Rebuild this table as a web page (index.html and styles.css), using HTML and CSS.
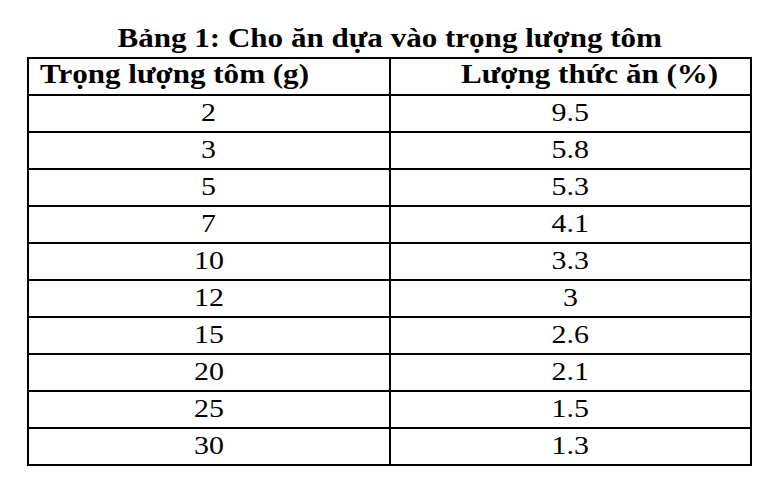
FILE: index.html
```html
<!DOCTYPE html>
<html lang="vi">
<head>
<meta charset="utf-8">
<title>Bảng 1</title>
<link rel="stylesheet" href="styles.css">
</head>
<body>
<div class="page">
  <div class="title"><span class="stretch">Bảng 1: Cho ăn dựa vào trọng lượng tôm</span></div>
  <table class="feed">
    <colgroup>
      <col class="col-half">
      <col class="col-half">
    </colgroup>
    <thead>
      <tr>
        <th class="h-left"><span class="stretch left">Trọng lượng tôm (g)</span></th>
        <th class="h-right"><span class="stretch left">Lượng thức ăn (%)</span></th>
      </tr>
    </thead>
    <tbody>
      <tr><td><span class="stretch">2</span></td><td><span class="stretch">9.5</span></td></tr>
      <tr><td><span class="stretch">3</span></td><td><span class="stretch">5.8</span></td></tr>
      <tr><td><span class="stretch">5</span></td><td><span class="stretch">5.3</span></td></tr>
      <tr><td><span class="stretch">7</span></td><td><span class="stretch">4.1</span></td></tr>
      <tr><td><span class="stretch">10</span></td><td><span class="stretch">3.3</span></td></tr>
      <tr><td><span class="stretch">12</span></td><td><span class="stretch">3</span></td></tr>
      <tr><td><span class="stretch">15</span></td><td><span class="stretch">2.6</span></td></tr>
      <tr><td><span class="stretch">20</span></td><td><span class="stretch">2.1</span></td></tr>
      <tr><td><span class="stretch">25</span></td><td><span class="stretch">1.5</span></td></tr>
      <tr><td><span class="stretch">30</span></td><td><span class="stretch">1.3</span></td></tr>
    </tbody>
  </table>
</div>
</body>
</html>
```

FILE: styles.css
```css
html, body {
  margin: 0;
  padding: 0;
  background: #fff;
}

body {
  font-family: "Liberation Serif", "Times New Roman", serif;
  color: #000;
}

.page {
  width: 725px;
  margin-left: 27px;
  padding-top: 23px;
}

.stretch {
  display: inline-block;
  transform: scaleX(1.15);
  transform-origin: center;
  white-space: nowrap;
}

.stretch.left {
  transform-origin: left;
}

.title {
  font-size: 27px;
  font-weight: bold;
  line-height: 30px;
  text-align: center;
  margin-bottom: 4px;
}

.feed {
  width: 725px;
  border-collapse: collapse;
  table-layout: fixed;
}

.col-half {
  width: 50%;
}

.feed th,
.feed td {
  border: 2px solid #000;
  padding: 0;
}

.feed th {
  font-size: 27px;
  font-weight: bold;
  line-height: 30px;
  padding-bottom: 5px;
  text-align: left;
}

.feed th.h-left {
  padding-left: 11px;
}

.feed th.h-right {
  padding-left: 70px;
}

.feed td {
  font-size: 26px;
  line-height: 33px;
  padding-bottom: 2px;
  text-align: center;
}
```
